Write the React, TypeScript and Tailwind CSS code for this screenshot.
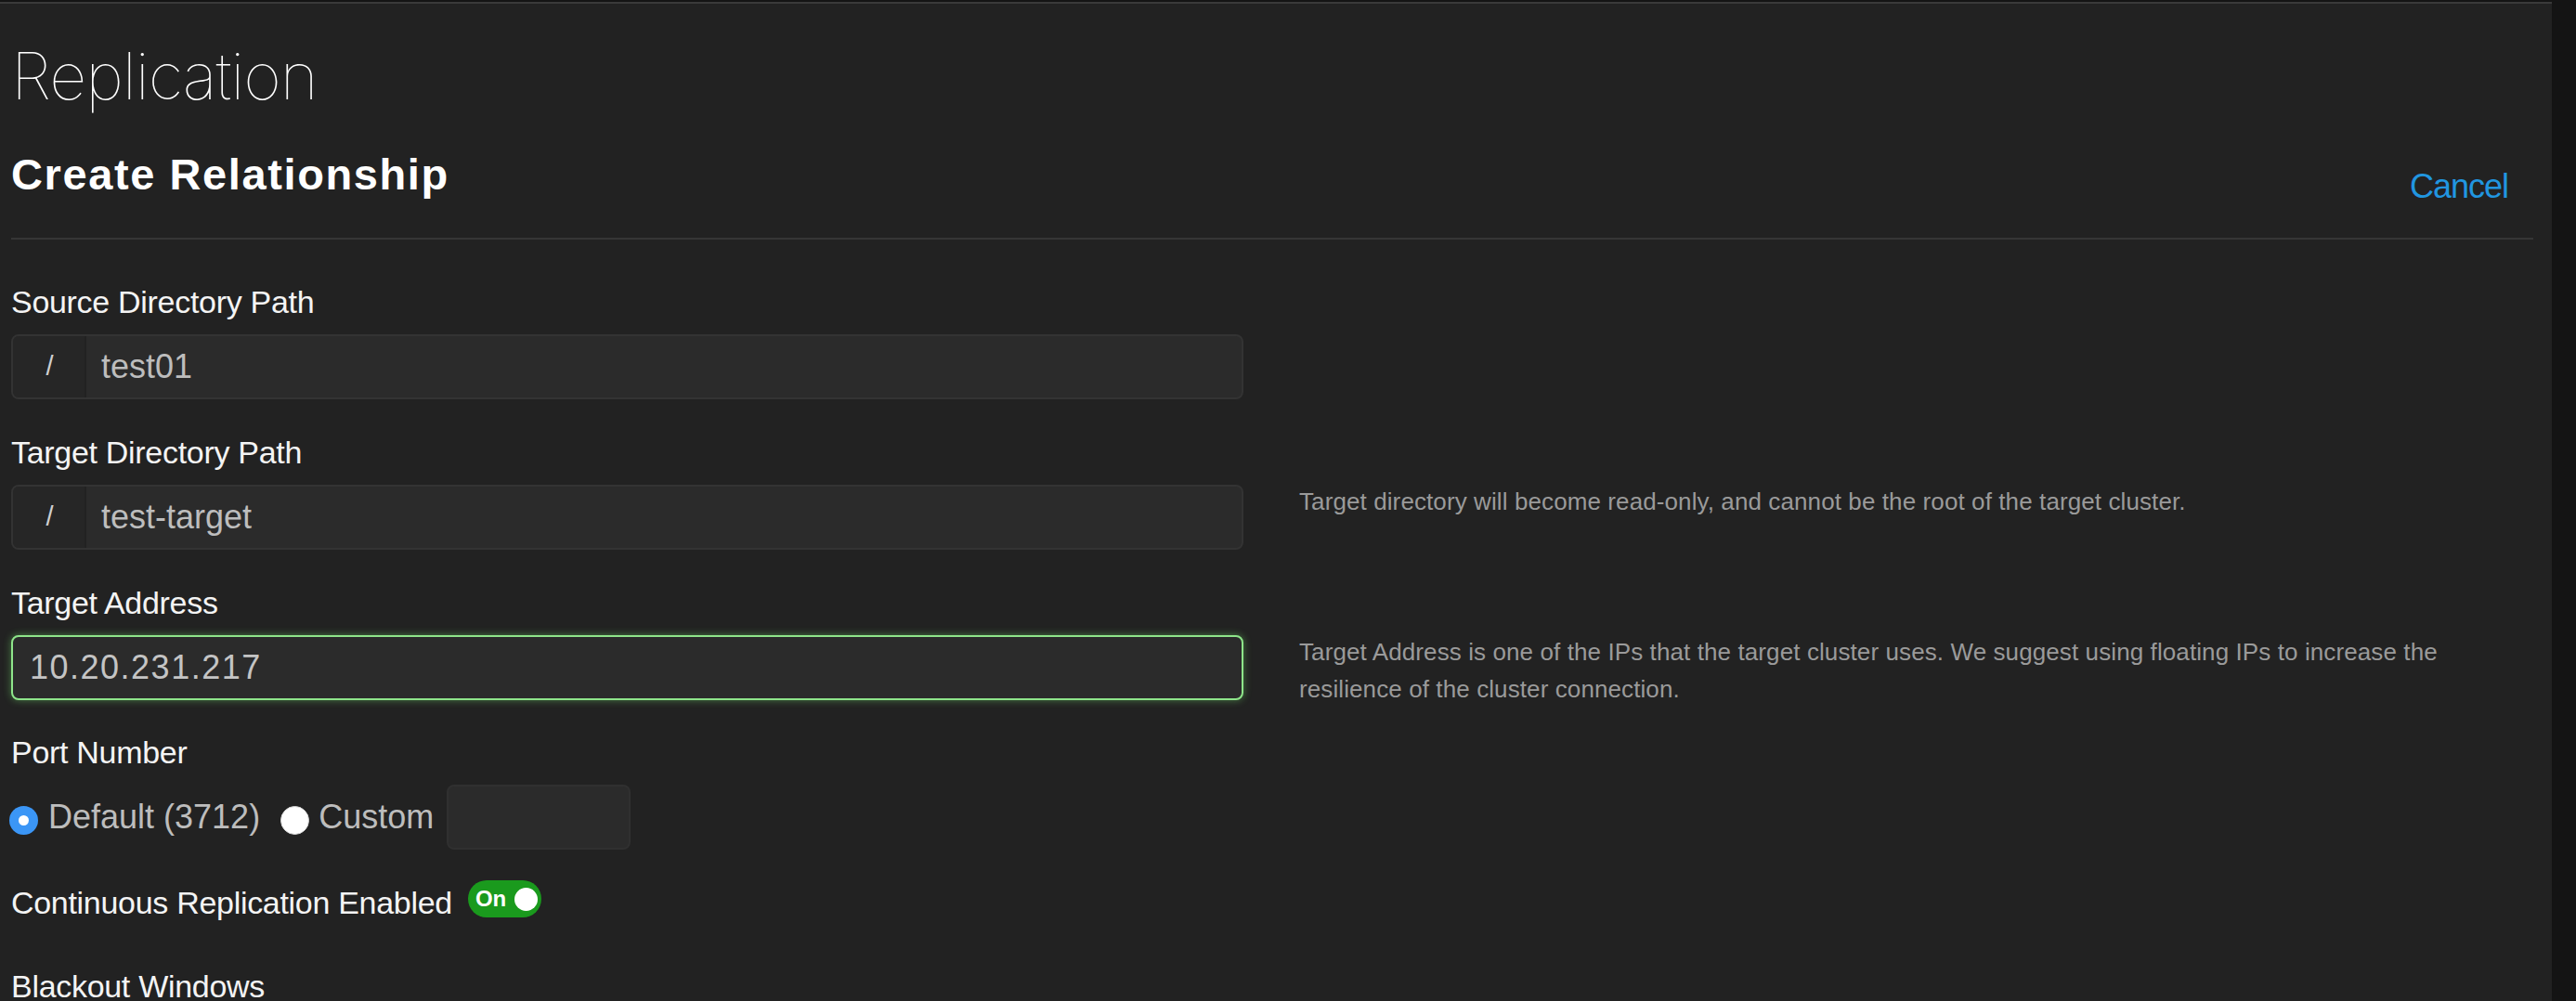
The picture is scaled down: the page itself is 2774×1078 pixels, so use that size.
import React from "react";

const fieldInput =
    "flex h-[70px] w-[1327px] shrink-0 overflow-hidden rounded-[8px] border-2 border-[#333333] bg-[#2b2b2b]";

function PathInput({ value }: { value: string }) {
    return (
        <div className={fieldInput}>
            <div className="flex w-[79px] shrink-0 items-center justify-center border-r-2 border-[#222222] bg-[#262626] pl-[2px] text-[29px] text-[#cfcfcf]">
                /
            </div>
            <div className="flex items-center pl-[16px] text-[36px] text-[#bdbdbd]">{value}</div>
        </div>
    );
}

function Help({ children }: { children: React.ReactNode }) {
    return (
        <p className="ml-[60px] -mt-[2px] w-[1290px] text-[26px] leading-[40px] tracking-[0.1px] text-[#9a9a9a]">
            {children}
        </p>
    );
}

function Label({ children, className = "" }: { children: React.ReactNode; className?: string }) {
    return (
        <div className={"h-[40px] text-[34px] leading-[40px] tracking-[-0.3px] text-[#f4f4f4] " + className}>
            {children}
        </div>
    );
}

export default function App() {
    return (
        <div className="min-h-screen w-full bg-[#141414] pt-[2px] font-['Liberation_Sans',Arial,sans-serif]">
            <div className="min-h-[1076px] w-[2748px] border-t-2 border-[#3a3a3a] bg-[#222222] pl-[12px]">
                <header>
                    <h1 className="pt-[36px] font-['Inter',sans-serif] text-[70px] font-thin leading-[84px] tracking-[-1.1px] text-white">
                        Replication
                    </h1>
                    <div className="mt-[37px] flex items-start justify-between pr-[47px]">
                        <h2 className="text-[47px] font-bold leading-[54px] tracking-[1.6px] text-white">
                            Create Relationship
                        </h2>
                        <a className="mt-[18px] text-[36px] leading-[44px] tracking-[-1px] text-[#2196e0]">Cancel</a>
                    </div>
                </header>
                <div className="mt-[33px] h-[2px] w-[2716px] bg-[#363636]" />

                <form className="pt-[47px]">
                    <Label className="mb-[15px]">Source Directory Path</Label>
                    <div className="flex">
                        <PathInput value="test01" />
                    </div>

                    <Label className="mb-[15px] mt-[37px]">Target Directory Path</Label>
                    <div className="flex items-start">
                        <PathInput value="test-target" />
                        <Help>Target directory will become read-only, and cannot be the root of the target cluster.</Help>
                    </div>

                    <Label className="mb-[15px] mt-[37px]">Target Address</Label>
                    <div className="flex items-start">
                        <div className="flex h-[70px] w-[1327px] shrink-0 items-center rounded-[8px] border-2 border-[#8ee58a] bg-[#2b2b2b] pl-[18px] text-[36px] tracking-[1.5px] text-[#c4c4c4] shadow-[0_0_9px_rgba(120,230,110,0.45)]">
                            10.20.231.217
                        </div>
                        <Help>
                            Target Address is one of the IPs that the target cluster uses. We suggest using floating IPs to
                            increase the resilience of the cluster connection.
                        </Help>
                    </div>

                    <Label className="mt-[28px]">Port Number</Label>
                    <div className="mt-[15px] flex h-[70px] items-center">
                        <span className="-ml-[2px] mt-[6px] flex h-[31px] w-[31px] items-center justify-center rounded-full bg-[#3b96f6]">
                            <span className="h-[11px] w-[11px] rounded-full bg-white" />
                        </span>
                        <span className="ml-[11px] text-[36px] leading-[44px] text-[#bdbdbd]">Default (3712)</span>
                        <span className="ml-[22px] mt-[6px] h-[31px] w-[31px] rounded-full border border-[#d8d8d8] bg-white" />
                        <span className="ml-[10px] text-[36px] leading-[44px] text-[#bdbdbd]">Custom</span>
                        <div className="ml-[14px] h-[70px] w-[198px] rounded-[8px] border-2 border-[#303030] bg-[#2b2b2b]" />
                    </div>

                    <div className="mt-[33px] flex items-start">
                        <Label className="mt-[4px]">Continuous Replication Enabled</Label>
                        <div className="ml-[17px] flex h-[40px] w-[79px] items-center justify-between rounded-full bg-[#1a9a1d] pl-[8px] pr-[4px]">
                            <span className="text-[24px] font-bold leading-none text-white">On</span>
                            <span className="h-[25px] w-[25px] rounded-full bg-white" />
                        </div>
                    </div>

                    <Label className="mt-[50px]">Blackout Windows</Label>
                </form>
            </div>
        </div>
    );
}
